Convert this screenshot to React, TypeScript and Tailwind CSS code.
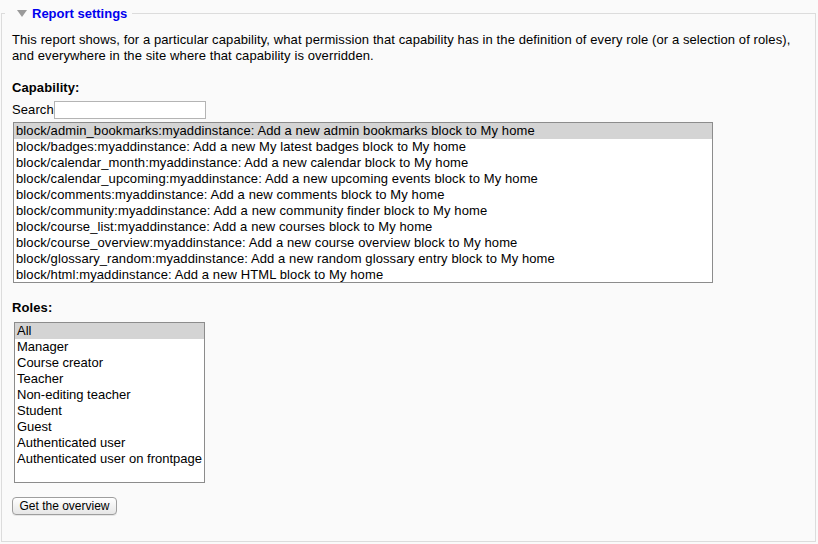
const capabilities = [
  "block/admin_bookmarks:myaddinstance: Add a new admin bookmarks block to My home",
  "block/badges:myaddinstance: Add a new My latest badges block to My home",
  "block/calendar_month:myaddinstance: Add a new calendar block to My home",
  "block/calendar_upcoming:myaddinstance: Add a new upcoming events block to My home",
  "block/comments:myaddinstance: Add a new comments block to My home",
  "block/community:myaddinstance: Add a new community finder block to My home",
  "block/course_list:myaddinstance: Add a new courses block to My home",
  "block/course_overview:myaddinstance: Add a new course overview block to My home",
  "block/glossary_random:myaddinstance: Add a new random glossary entry block to My home",
  "block/html:myaddinstance: Add a new HTML block to My home",
];

const roles = [
  "All",
  "Manager",
  "Course creator",
  "Teacher",
  "Non-editing teacher",
  "Student",
  "Guest",
  "Authenticated user",
  "Authenticated user on frontpage",
];

function ListBox({ items, width }: { items: string[]; width: string }) {
  return (
    <div
      className={`${width} h-[161px] overflow-hidden border border-[#8c8c8c] bg-white`}
    >
      {items.map((item, i) => (
        <div
          key={item}
          className={`h-4 whitespace-nowrap pl-[2px] leading-4 text-black ${
            i === 0 ? "bg-[#d4d4d4]" : ""
          }`}
        >
          {item}
        </div>
      ))}
    </div>
  );
}

export default function App() {
  return (
    <div className="min-h-[544px] bg-[#fafafa] pt-[6px] pb-[2px] pl-px pr-[2px] font-['Liberation_Sans',Arial,sans-serif] text-[13px] tracking-[0.1px] text-black">
      <fieldset className="h-[536px] border border-[#dcdcdc] px-[10px]">
        <legend className="ml-[-7px] pl-[12px] pr-[5px]">
          <span className="flex items-center gap-[5px] leading-[15px]">
            <svg width="10" height="7" viewBox="0 0 10 7" className="mt-[-1px]">
              <path d="M0 0 L10 0 L5 7 Z" fill="#9a9a9a" />
            </svg>
            <span className="font-bold tracking-normal text-[#0000ee]">
              Report settings
            </span>
          </span>
        </legend>

        <p className="mt-[11px] leading-4">
          This report shows, for a particular capability, what permission that
          capability has in the definition of every role (or a selection of
          roles), and everywhere in the site where that capability is
          overridden.
        </p>

        <div className="mt-4 font-bold leading-4">Capability:</div>

        <div className="mt-[5px] flex items-center leading-4">
          <label htmlFor="search">Search</label>
          <input
            id="search"
            type="text"
            className="h-[18px] w-[152px] border border-[#b4b4b4] bg-white px-1 text-[13px] outline-none"
          />
        </div>

        <div className="mt-[3px] pl-px">
          <ListBox items={capabilities} width="w-[700px]" />
        </div>

        <div className="mt-[17px] font-bold leading-4">Roles:</div>

        <div className="mt-[6px] pl-[2px] tracking-normal">
          <ListBox items={roles} width="w-[191px]" />
        </div>

        <button
          type="button"
          className="mt-[14px] h-[18px] w-[105px] rounded-[4px] border border-[#9e9e9e] bg-gradient-to-b from-white to-[#e6e6e6] text-[12px] leading-4 tracking-normal text-black shadow-[0_1px_0_rgba(0,0,0,0.08)]"
        >
          Get the overview
        </button>
      </fieldset>
    </div>
  );
}
